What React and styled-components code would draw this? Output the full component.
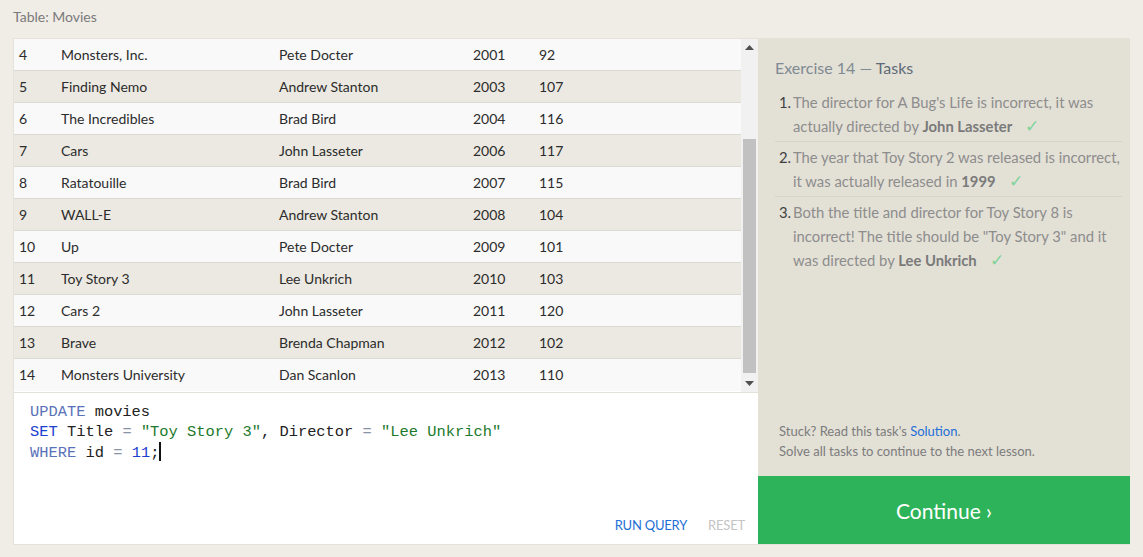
import React from 'react';
import styled, { createGlobalStyle } from 'styled-components';

const GlobalStyle = createGlobalStyle`
  body {
    margin: 0;
    background: #f0ece6;
    font-family: 'Lato', 'Open Sans', sans-serif;
  }
`;

const Page = styled.div`
  width: 1143px;
  height: 557px;
  padding: 0 13px;
  box-sizing: border-box;
`;

const Caption = styled.div`
  height: 38px;
  line-height: 34px;
  font-size: 14px;
  color: #7a7a7a;
`;

const Main = styled.div`
  display: grid;
  grid-template-columns: 744px 372px;
  height: 507px;
  border: 1px solid #e6e2da;
  border-right: none;
  box-sizing: border-box;
`;

const Left = styled.div`
  display: flex;
  flex-direction: column;
  background: #fff;
`;

const TableWrap = styled.div`
  display: flex;
  height: 353px;
  border-bottom: 1px solid #e4e1da;
`;

const Rows = styled.div`
  flex: 1;
  display: flex;
  flex-direction: column;
`;

const Row = styled.div`
  display: grid;
  grid-template-columns: 42px 218px 194px 66px 1fr;
  height: 32px;
  align-items: center;
  padding: 4px 0 0 5px;
  box-sizing: border-box;
  border-bottom: 1px solid #dcdad4;
  background: ${(p) => (p.$alt ? '#ebe9e1' : '#f9f9f9')};
  font-size: 14px;
  color: #2c2c2c;
  &:last-child {
    border-bottom: none;
  }
`;

const Scrollbar = styled.div`
  width: 17px;
  background: #f1f1f1;
  display: flex;
  flex-direction: column;
  align-items: center;
`;

const Arrow = styled.div`
  height: 17px;
  width: 17px;
  display: flex;
  align-items: center;
  justify-content: center;
  svg { display: block; }
`;

const Track = styled.div`
  flex: 1;
  width: 100%;
  padding: 83px 2px 0;
  box-sizing: border-box;
`;

const Thumb = styled.div`
  height: 234px;
  background: #c1c1c1;
`;

const Editor = styled.div`
  flex: 1;
  display: flex;
  flex-direction: column;
  background: #fff;
`;

const Code = styled.pre`
  margin: 0;
  padding: 9px 16px 0;
  font-family: 'Liberation Mono', monospace;
  font-size: 15.4px;
  line-height: 20px;
  color: #222;
  flex: 1;
`;

const Tok = styled.span`
  color: ${(p) => p.$c};
`;

const Caret = styled.span`
  display: inline-block;
  width: 2px;
  height: 19px;
  background: #111;
  vertical-align: -4px;
`;

const Actions = styled.div`
  display: flex;
  justify-content: flex-end;
  gap: 21px;
  padding: 0 13px 11px;
`;

const ActionBtn = styled.span`
  font-size: 13px;
  color: ${(p) => (p.$muted ? '#c4c4c4' : '#1f6fd6')};
  letter-spacing: -0.2px;
`;

const Right = styled.div`
  display: flex;
  flex-direction: column;
  background: #e3e0d6;
`;

const Tasks = styled.div`
  flex: 1;
  padding: 19px 8px 0 17px;
`;

const Heading = styled.div`
  font-size: 16px;
  line-height: 20px;
  color: #7f8a93;
  margin-bottom: 9px;
  b {
    font-weight: normal;
    color: #5f6b76;
  }
`;

const List = styled.ol`
  margin: 0;
  padding: 0;
  list-style: none;
`;

const Item = styled.li`
  display: flex;
  font-size: 14.8px;
  line-height: 24px;
  color: #8d8d8d;
  padding: 3px 0 3px 4px;
  & + & {
    border-top: 1px solid #d6d3c9;
  }
`;

const Num = styled.span`
  color: #3f3f3f;
  width: 14px;
  flex: none;
`;

const Strong = styled.b`
  color: #7a7a7a;
`;

const Check = styled.span`
  display: inline-block;
  color: #7fd49b;
  font-size: 17px;
  line-height: 1;
  margin-left: 13px;
`;

const Help = styled.div`
  padding: 0 20px 15px 21px;
  font-size: 13px;
  line-height: 20px;
  color: #7c7c7c;
  a {
    color: #1f6fd6;
    text-decoration: none;
  }
`;

const Continue = styled.div`
  height: 68px;
  background: #2db45a;
  color: #fff;
  font-size: 21px;
  display: flex;
  align-items: center;
  justify-content: center;
`;

const movies = [
  [4, 'Monsters, Inc.', 'Pete Docter', 2001, 92],
  [5, 'Finding Nemo', 'Andrew Stanton', 2003, 107],
  [6, 'The Incredibles', 'Brad Bird', 2004, 116],
  [7, 'Cars', 'John Lasseter', 2006, 117],
  [8, 'Ratatouille', 'Brad Bird', 2007, 115],
  [9, 'WALL-E', 'Andrew Stanton', 2008, 104],
  [10, 'Up', 'Pete Docter', 2009, 101],
  [11, 'Toy Story 3', 'Lee Unkrich', 2010, 103],
  [12, 'Cars 2', 'John Lasseter', 2011, 120],
  [13, 'Brave', 'Brenda Chapman', 2012, 102],
  [14, 'Monsters University', 'Dan Scanlon', 2013, 110],
];

const KW = '#5a72b8';
const KW2 = '#1d3fcf';
const STR = '#1d7a2c';
const OP = '#8a93a8';

export default function App() {
  return (
    <Page>
      <GlobalStyle />
      <Caption>Table: Movies</Caption>
      <Main>
        <Left>
          <TableWrap>
            <Rows>
              {movies.map((m, i) => (
                <Row key={m[0]} $alt={i % 2 === 1}>
                  {m.map((c, j) => (
                    <span key={j}>{c}</span>
                  ))}
                  <span />
                </Row>
              ))}
            </Rows>
            <Scrollbar>
              <Arrow>
                <svg width="9" height="5" viewBox="0 0 9 5"><path d="M0 5 L4.5 0 L9 5 Z" fill="#505050" /></svg>
              </Arrow>
              <Track>
                <Thumb />
              </Track>
              <Arrow>
                <svg width="9" height="5" viewBox="0 0 9 5"><path d="M0 0 L9 0 L4.5 5 Z" fill="#505050" /></svg>
              </Arrow>
            </Scrollbar>
          </TableWrap>
          <Editor>
            <Code>
              <Tok $c={KW}>UPDATE</Tok> movies{'\n'}
              <Tok $c={KW2}>SET</Tok> Title <Tok $c={OP}>=</Tok> <Tok $c={STR}>"Toy Story 3"</Tok>, Director <Tok $c={OP}>=</Tok> <Tok $c={STR}>"Lee Unkrich"</Tok>{'\n'}
              <Tok $c={KW}>WHERE</Tok> id <Tok $c={OP}>=</Tok> <Tok $c={KW2}>11</Tok>;<Caret />
            </Code>
            <Actions>
              <ActionBtn>RUN QUERY</ActionBtn>
              <ActionBtn $muted>RESET</ActionBtn>
            </Actions>
          </Editor>
        </Left>
        <Right>
          <Tasks>
            <Heading>
              Exercise 14 — <b>Tasks</b>
            </Heading>
            <List>
              <Item>
                <Num>1.</Num>
                <span>
                  The director for A Bug's Life is incorrect, it was actually directed by <Strong>John Lasseter</Strong>
                  <Check>✓</Check>
                </span>
              </Item>
              <Item>
                <Num>2.</Num>
                <span>
                  The year that Toy Story 2 was released is incorrect, it was actually released in <Strong>1999</Strong>
                  <Check>✓</Check>
                </span>
              </Item>
              <Item>
                <Num>3.</Num>
                <span>
                  Both the title and director for Toy Story 8 is incorrect! The title should be "Toy Story 3" and it was directed by <Strong>Lee Unkrich</Strong>
                  <Check>✓</Check>
                </span>
              </Item>
            </List>
          </Tasks>
          <Help>
            Stuck? Read this task's <a href="#">Solution</a>.
            <br />
            Solve all tasks to continue to the next lesson.
          </Help>
          <Continue>Continue ›</Continue>
        </Right>
      </Main>
    </Page>
  );
}
